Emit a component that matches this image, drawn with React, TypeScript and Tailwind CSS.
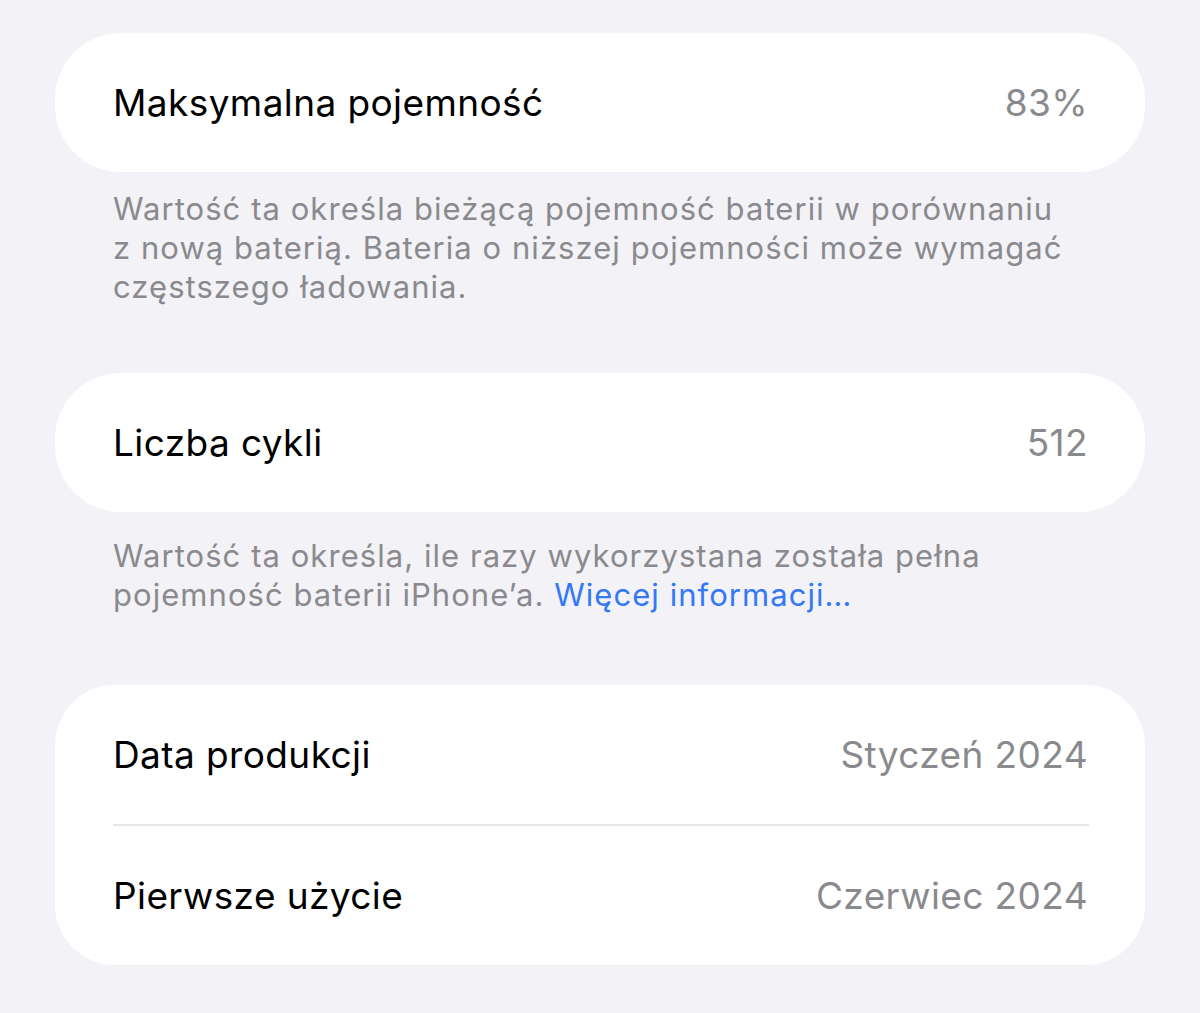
import React from "react";

const font = { fontFamily: "Inter, 'Noto Sans', sans-serif" };

function Row({ label, value }: { label: string; value: string }) {
  return (
    <div className="flex h-[139px] items-center justify-between pl-[58px] pr-[57px]">
      <span className="text-[37px] text-black tracking-[0.4px]">{label}</span>
      <span className="text-[37px] text-[#8a8a8e] tracking-[0.4px]">{value}</span>
    </div>
  );
}

export default function App() {
  return (
    <div className="min-h-[1013px] w-[1200px] bg-[#f2f2f7] pt-[33px]" style={font}>
      <div className="mx-[55px] rounded-[66px] bg-white">
        <Row label="Maksymalna pojemność" value="83%" />
      </div>
      <p className="px-[113px] pt-[17px] text-[31px] leading-[39px] text-[#8a8a8e] tracking-[1.05px] whitespace-nowrap">
        Wartość ta określa bieżącą pojemność baterii w porównaniu
        <br />
        z nową baterią. Bateria o niższej pojemności może wymagać
        <br />
        częstszego ładowania.
      </p>
      <div className="mx-[55px] mt-[67px] rounded-[66px] bg-white">
        <Row label="Liczba cykli" value="512" />
      </div>
      <p className="px-[113px] pt-[24px] text-[31px] leading-[39px] text-[#8a8a8e] tracking-[1.05px] whitespace-nowrap">
        Wartość ta określa, ile razy wykorzystana została pełna
        <br />
        pojemność baterii iPhone’a. <span className="text-[#3478f6]">Więcej informacji…</span>
      </p>
      <div className="mx-[55px] mt-[71px] rounded-[60px] bg-white">
        <Row label="Data produkcji" value="Styczeń 2024" />
        <div className="ml-[58px] mr-[56px] h-[2px] bg-[#e5e5ea]" />
        <Row label="Pierwsze użycie" value="Czerwiec 2024" />
      </div>
    </div>
  );
}
